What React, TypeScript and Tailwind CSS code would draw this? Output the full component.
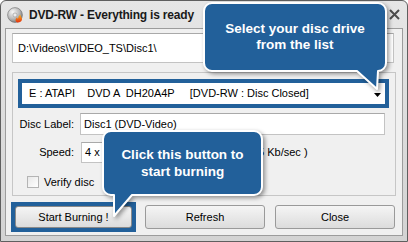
import React from "react"

function DiscIcon() {
  return (
    <svg width="16" height="16" viewBox="0 0 16 16">
      <defs>
        <radialGradient id="discGrad" cx="35%" cy="30%" r="75%">
          <stop offset="0" stopColor="#f6f6f6" />
          <stop offset="0.6" stopColor="#b9b9b9" />
          <stop offset="1" stopColor="#777777" />
        </radialGradient>
        <linearGradient id="flameGrad" x1="0" y1="0" x2="0" y2="1">
          <stop offset="0" stopColor="#ffb21e" />
          <stop offset="1" stopColor="#e2300e" />
        </linearGradient>
      </defs>
      <circle cx="8" cy="8" r="7.4" fill="url(#discGrad)" stroke="#6a6a6a" strokeWidth="0.6" />
      <circle cx="8" cy="8" r="2" fill="#ececec" stroke="#8a8a8a" strokeWidth="0.5" />
      <path
        d="M10.3 15.4C8 14.8 8.2 11.8 9.9 10.2C10 11.6 10.9 11.9 11.4 11.1C11.1 9.5 12.3 8.1 13.6 7.7C13.1 9.5 15.6 10.6 14.9 13.1C14.4 14.7 12.5 15.7 10.3 15.4Z"
        fill="url(#flameGrad)"
      />
    </svg>
  )
}

function Callout({
  box,
  path,
  lines,
  textTop,
  textLeft,
  textWidth,
  leading,
}: {
  box: string
  path: string
  lines: string[]
  textTop: string
  textLeft: string
  textWidth: string
  leading: string
}) {
  return (
    <div className={`absolute ${box}`}>
      <svg className="absolute inset-0 w-full h-full overflow-visible drop-shadow-[2px_2px_2px_rgba(0,0,0,0.4)]">
        <path d={path} fill="#22609a" stroke="#ffffff" strokeWidth="2" strokeLinejoin="round" />
      </svg>
      <div
        className={`relative ${textTop} ${textLeft} ${textWidth} ${leading} text-center text-[13.5px] font-bold text-white`}
      >
        {lines.map((l) => (
          <div key={l}>{l}</div>
        ))}
      </div>
    </div>
  )
}

export default function App() {
  return (
    <div className="relative w-[408px] h-[242px] overflow-hidden bg-white font-['Liberation_Sans',Arial,sans-serif] text-[11px] text-black">
      <div className="w-full h-full flex flex-col rounded-t-[6px] border border-[#5f5f5f] bg-gradient-to-b from-[#e6e6e6] to-[#d3d3d3]">
        {/* title bar */}
        <div className="h-[27px] flex items-center pl-[6px] pr-[7px]">
          <DiscIcon />
          <span className="ml-[6px] text-[12px] font-bold tracking-[-0.2px] text-[#1a1a1a]">
            DVD-RW - Everything is ready
          </span>
          <svg className="ml-auto" width="11" height="11" viewBox="0 0 11 11">
            <path d="M1 1L10 10M10 1L1 10" stroke="#4d4d4d" strokeWidth="2" />
          </svg>
        </div>

        {/* window body */}
        <div className="mx-[4px] h-[208px] border border-[#9c9c9c] bg-[#f0f0f0] px-[6px] pt-[4px]">
          <div className="w-[382px] h-[30px] flex items-center pl-[5px] bg-white border border-[#c3c3c3] border-t-[#a9a9a9]">
            D:\Videos\VIDEO_TS\Disc1\
          </div>

          {/* group box */}
          <div className="mt-[9px] w-full h-[124px] border border-[#c6c6c6]">
            <div className="ml-[5px] mt-[6px] w-[371px] h-[29px] bg-[#22609a] p-[4px]">
              <div className="w-full h-full bg-white flex items-center pl-[7px] pr-[4px]">
                <span className="whitespace-pre">
                  {"E : ATAPI    DVD A  DH20A4P     [DVD-RW : Disc Closed]"}
                </span>
                <svg className="ml-auto mt-[3px]" width="7" height="4" viewBox="0 0 7 4">
                  <path d="M0 0H7L3.5 4Z" fill="#000" />
                </svg>
              </div>
            </div>

            <div className="mt-[5px] flex items-center h-[22px]">
              <div className="w-[67px] pr-[6px] text-right">Disc Label:</div>
              <div className="w-[305px] h-[22px] flex items-center pl-[3px] bg-white border border-[#c3c3c3] border-t-[#a9a9a9]">
                Disc1 (DVD-Video)
              </div>
            </div>

            <div className="mt-[7px] flex items-center h-[21px]">
              <div className="w-[68px] pr-[7px] text-right">Speed:</div>
              <div className="w-[120px] h-[21px] flex items-center pl-[3px] bg-white border border-[#c3c3c3] border-t-[#a9a9a9]">
                4 x
              </div>
              <span className="ml-[32px]">( 5545 Kb/sec )</span>
            </div>

            <div className="mt-[11px] ml-[14px] flex items-center">
              <div className="w-[12px] h-[12px] border border-[#b4b4b4] bg-gradient-to-br from-[#e8e8e8] to-white" />
              <span className="ml-[5px]">Verify disc</span>
            </div>
          </div>

          {/* buttons */}
          <div className="mt-[6px] flex items-center">
            <div className="-ml-[1px] w-[125px] h-[30px] bg-[#22609a] p-[4px]">
              <div className="w-full h-full flex items-center justify-center rounded-[3px] border border-[#8a8a8a] bg-gradient-to-b from-[#f5f5f5] to-[#dcdcdc]">
                Start Burning !
              </div>
            </div>
            <div className="ml-[9px] w-[120px] h-[24px] flex items-center justify-center rounded-[3px] border border-[#9a9a9a] bg-gradient-to-b from-[#f5f5f5] to-[#dcdcdc]">
              Refresh
            </div>
            <div className="ml-[10px] w-[120px] h-[24px] flex items-center justify-center rounded-[3px] border border-[#9a9a9a] bg-gradient-to-b from-[#f5f5f5] to-[#dcdcdc]">
              Close
            </div>
          </div>
        </div>
      </div>

      <Callout
        box="left-[200px] top-0 w-[190px] h-[100px]"
        path="M12,3 H178 A8,8 0 0 1 186,11 V63 A8,8 0 0 1 178,71 L177,89 L157,71 H12 A8,8 0 0 1 4,63 V11 A8,8 0 0 1 12,3 Z"
        lines={["Select your disc drive", "from the list"]}
        textTop="top-[21px]"
        textLeft="left-[4px]"
        textWidth="w-[182px]"
        leading="leading-[16px]"
      />
      <Callout
        box="left-[100px] top-[128px] w-[170px] h-[95px]"
        path="M11,3 H154 A8,8 0 0 1 162,11 V59 A8,8 0 0 1 154,67 H32 L14,88 V67 H11 A8,8 0 0 1 3,59 V11 A8,8 0 0 1 11,3 Z"
        lines={["Click this button to", "start burning"]}
        textTop="top-[18px]"
        textLeft="left-[3px]"
        textWidth="w-[159px]"
        leading="leading-[17px]"
      />
    </div>
  )
}
